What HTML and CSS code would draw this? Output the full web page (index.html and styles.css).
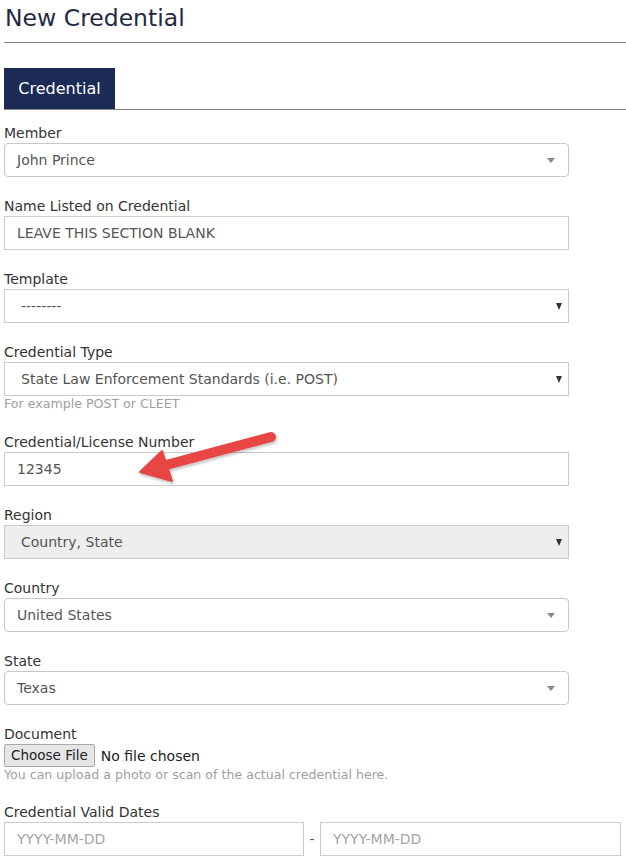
FILE: index.html
```html
<!DOCTYPE html>
<html>
<head>
<meta charset="utf-8">
<link rel="stylesheet" href="styles.css">
</head>
<body>
<div class="page">
  <h1 class="title">New Credential</h1>
  <div class="tabs"><span class="tab">Credential</span></div>
  <form class="form">
    <div class="group">
      <label class="label">Member</label>
      <div class="field s2">John Prince<span class="caret light"></span></div>
    </div>
    <div class="group">
      <label class="label">Name Listed on Credential</label>
      <div class="field">LEAVE THIS SECTION BLANK</div>
    </div>
    <div class="group">
      <label class="label">Template</label>
      <div class="field sel">--------<span class="caret dark"></span></div>
    </div>
    <div class="group">
      <label class="label">Credential Type</label>
      <div class="field sel">State Law Enforcement Standards (i.e. POST)<span class="caret dark"></span></div>
      <div class="help">For example POST or CLEET</div>
    </div>
    <div class="group">
      <label class="label">Credential/License Number</label>
      <div class="field">12345</div>
    </div>
    <div class="group">
      <label class="label">Region</label>
      <div class="field sel disabled">Country, State<span class="caret dark"></span></div>
    </div>
    <div class="group">
      <label class="label">Country</label>
      <div class="field s2">United States<span class="caret light"></span></div>
    </div>
    <div class="group">
      <label class="label">State</label>
      <div class="field s2">Texas<span class="caret light"></span></div>
    </div>
    <div class="group">
      <label class="label">Document</label>
      <div class="file"><span class="filebtn">Choose File</span><span class="filename">No file chosen</span></div>
      <div class="help help2">You can upload a photo or scan of the actual credential here.</div>
    </div>
    <div class="group">
      <label class="label">Credential Valid Dates</label>
      <div class="dates">
        <div class="field date ph">YYYY-MM-DD</div>
        <span class="dash">-</span>
        <div class="field date ph">YYYY-MM-DD</div>
      </div>
    </div>
  </form>
  <svg class="arrow" width="170" height="70" viewBox="130 422 170 70" xmlns="http://www.w3.org/2000/svg">
    <defs>
      <filter id="sh" x="-10%" y="-20%" width="130%" height="150%">
        <feDropShadow dx="1" dy="2" stdDeviation="1.5" flood-color="#000" flood-opacity="0.25"/>
      </filter>
    </defs>
    <g filter="url(#sh)" fill="#e84444" stroke="#e84444">
      <line x1="166" y1="465" x2="271" y2="437" stroke-width="10" stroke-linecap="round"/>
      <polygon points="140,472 162,451 172,481" stroke-width="2" stroke-linejoin="round"/>
    </g>
  </svg>
</div>
</body>
</html>
```
FILE: styles.css
```css
html, body {
  margin: 0;
  padding: 0;
  background: #fff;
}
body {
  font-family: "DejaVu Sans", Verdana, sans-serif;
  font-size: 14px;
  color: #333;
}
.page {
  position: relative;
  width: 626px;
  padding-left: 4px;
  box-sizing: border-box;
}
.title {
  margin: 0;
  padding-top: 3px;
  font-size: 23.5px;
  font-weight: normal;
  line-height: 30px;
  color: #1f2a44;
  padding-left: 1px;
  height: 39px;
  border-bottom: 1px solid #8a8a8a;
}
.tabs {
  margin-top: 25px;
  border-bottom: 1px solid #8a8a8a;
  display: flex;
}
.tab {
  background: #1b2a57;
  color: #fff;
  font-size: 16px;
  width: 111px;
  height: 41px;
  line-height: 41px;
  text-align: center;
}
.form {
  display: flex;
  flex-direction: column;
  padding-top: 14px;
}
.group {
  display: flex;
  flex-direction: column;
  margin-bottom: 20px;
}
.label {
  display: block;
  line-height: 18px;
  margin-bottom: 1px;
  color: #333;
}
.field {
  position: relative;
  width: 565px;
  height: 34px;
  box-sizing: border-box;
  border: 1px solid #cbcbcb;
  padding: 0 12px;
  line-height: 32px;
  color: #555;
  background: #fff;
}
.s2 {
  border-radius: 4px;
  border-color: #c8c8c8;
}
.sel {
  padding-left: 16px;
}
.disabled {
  background: #eee;
}
.caret {
  position: absolute;
  top: 50%;
  width: 0;
  height: 0;
  border-left: 4px solid transparent;
  border-right: 4px solid transparent;
}
.caret.light {
  right: 13px;
  margin-top: -2px;
  border-top: 5px solid #888;
}
.caret.dark {
  right: 6px;
  margin-top: -3px;
  border-left-width: 3.5px;
  border-right-width: 3.5px;
  border-top: 7px solid #333;
}
.help {
  color: #a0a0a0;
  font-size: 12.6px;
  line-height: 16px;
  margin-top: 0;
  margin-bottom: 1px;
}
.help2 {
  margin-top: 0;
  margin-bottom: 0;
}
.file {
  display: flex;
  align-items: center;
  height: 23px;
}
.filebtn {
  display: inline-block;
  box-sizing: border-box;
  height: 23px;
  line-height: 21px;
  padding: 0 6px;
  border: 1px solid #a8a8a8;
  border-radius: 2px;
  background: #e6e6e6;
  color: #222;
  font-size: 13.5px;
}
.filename {
  margin-left: 6px;
  font-size: 14px;
  color: #222;
}
.dates {
  display: flex;
  align-items: center;
}
.date {
  width: 300px;
}
.date + .dash + .date {
  width: 301px;
}
.dash {
  width: 16px;
  text-align: center;
  color: #555;
}
.ph {
  color: #a5a5a5;
}
.arrow {
  position: absolute;
  left: 130px;
  top: 422px;
}
```
